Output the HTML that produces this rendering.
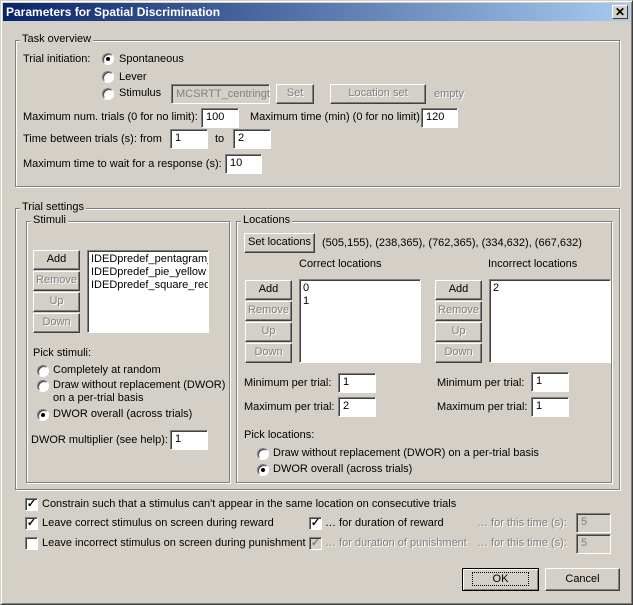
<!DOCTYPE html>
<html><head><meta charset="utf-8"><style>
*{box-sizing:border-box;margin:0;padding:0}
body{width:633px;height:605px;background:#d4d0c8;font-family:"Liberation Sans",sans-serif;font-size:11px;color:#000;position:relative;overflow:hidden}
.a{position:absolute;white-space:nowrap}
.win{left:0;top:0;width:633px;height:605px;border:1px solid;border-color:#d4d0c8 #404040 #404040 #d4d0c8;box-shadow:inset 1px 1px 0 #fff,inset -1px -1px 0 #808080}
.title{left:3px;top:3px;width:627px;height:18px;background:linear-gradient(90deg,#0a246a,#a6caf0);color:#fff;font-weight:bold;font-size:12px;padding:2px 0 0 3px}
.close{left:612px;top:5px;width:16px;height:14px;background:#d4d0c8;border:1px solid;border-color:#fff #404040 #404040 #fff;font-size:12px;font-weight:bold;text-align:center;line-height:12px;color:#000}
.grp{border:1px solid #808080;box-shadow:1px 1px 0 #fff,inset 1px 1px 0 #fff}
.lbl{background:#d4d0c8;padding:0 2px}
.btn{background:#d4d0c8;border:1px solid;border-color:#fff #404040 #404040 #fff;box-shadow:inset -1px -1px 0 #808080;text-align:center;line-height:17px}
.dis{color:#808080;text-shadow:1px 1px 0 #fff}
.ed{background:#fff;border:1px solid;border-color:#808080 #fff #fff #808080;box-shadow:inset 1px 1px 0 #404040;padding:2px 0 0 4px;line-height:13px}
.edd{background:#d4d0c8;color:#808080}
.rad{width:12px;height:12px;border-radius:50%;background:#fff;border:1px solid;border-color:#808080 #fff #fff #808080;box-shadow:inset 1px 1px 0 #404040}
.rad.on::after{content:"";position:absolute;left:3px;top:3px;width:4px;height:4px;border-radius:50%;background:#000}
.cb{width:13px;height:13px;background:#fff;border:1px solid;border-color:#808080 #fff #fff #808080;box-shadow:inset 1px 1px 0 #404040;font-size:11px;line-height:11px;text-align:center;font-weight:bold}
.cbd{background:#d4d0c8;color:#808080}
</style></head><body>
<div class="a win"></div>
<div class="a title">Parameters for Spatial Discrimination</div>
<div class="a close">✕</div>

<div class="a grp" style="left:15px;top:40px;width:605px;height:147px"></div>
<div class="a lbl" style="left:20px;top:33px">Task overview</div>
<div class="a" style="left:23px;top:53px">Trial initiation:</div>
<div class="a rad on" style="left:102px;top:53px"></div><div class="a" style="left:119px;top:53px">Spontaneous</div>
<div class="a rad" style="left:102px;top:71px"></div><div class="a" style="left:119px;top:71px">Lever</div>
<div class="a rad" style="left:102px;top:88px"></div><div class="a" style="left:119px;top:87px">Stimulus</div>
<div class="a ed edd" style="left:171px;top:84px;width:99px;height:20px;padding-top:3px">MCSRTT_centringt</div>
<div class="a btn dis" style="left:276px;top:84px;width:38px;height:20px">Set</div>
<div class="a btn dis" style="left:330px;top:84px;width:96px;height:20px">Location set</div>
<div class="a dis" style="left:434px;top:88px">empty</div>
<div class="a" style="left:23px;top:111px">Maximum num. trials (0 for no limit):</div>
<div class="a ed" style="left:201px;top:108px;width:38px;height:20px">100</div>
<div class="a" style="left:250px;top:111px">Maximum time (min) (0 for no limit):</div>
<div class="a ed" style="left:421px;top:108px;width:37px;height:20px">120</div>
<div class="a" style="left:23px;top:133px">Time between trials (s): from</div>
<div class="a ed" style="left:170px;top:129px;width:38px;height:20px">1</div>
<div class="a" style="left:215px;top:133px">to</div>
<div class="a ed" style="left:233px;top:129px;width:38px;height:20px">2</div>
<div class="a" style="left:23px;top:158px">Maximum time to wait for a response (s):</div>
<div class="a ed" style="left:225px;top:154px;width:37px;height:20px">10</div>

<div class="a grp" style="left:15px;top:208px;width:605px;height:282px"></div>
<div class="a lbl" style="left:20px;top:201px">Trial settings</div>
<div class="a grp" style="left:26px;top:221px;width:204px;height:262px"></div>
<div class="a lbl" style="left:31px;top:214px">Stimuli</div>
<div class="a btn" style="left:33px;top:250px;width:47px;height:20px">Add</div>
<div class="a btn dis" style="left:33px;top:271px;width:47px;height:20px">Remove</div>
<div class="a btn dis" style="left:33px;top:292px;width:47px;height:20px">Up</div>
<div class="a btn dis" style="left:33px;top:313px;width:47px;height:20px">Down</div>
<div class="a ed" style="left:87px;top:250px;width:122px;height:83px;overflow:hidden;padding:2px 0 0 3px">IDEDpredef_pentagram_<br>IDEDpredef_pie_yellow<br>IDEDpredef_square_red</div>
<div class="a" style="left:33px;top:347px">Pick stimuli:</div>
<div class="a rad" style="left:37px;top:365px"></div><div class="a" style="left:53px;top:364px">Completely at random</div>
<div class="a rad" style="left:37px;top:380px"></div><div class="a" style="left:53px;top:379px;line-height:13px">Draw without replacement (DWOR)<br>on a per-trial basis</div>
<div class="a rad on" style="left:37px;top:409px"></div><div class="a" style="left:53px;top:408px">DWOR overall (across trials)</div>
<div class="a" style="left:31px;top:434px">DWOR multiplier (see help):</div>
<div class="a ed" style="left:170px;top:430px;width:38px;height:20px">1</div>

<div class="a grp" style="left:236px;top:221px;width:376px;height:262px"></div>
<div class="a lbl" style="left:241px;top:214px">Locations</div>
<div class="a btn" style="left:244px;top:233px;width:71px;height:20px">Set locations</div>
<div class="a" style="left:322px;top:237px">(505,155), (238,365), (762,365), (334,632), (667,632)</div>
<div class="a" style="left:299px;top:258px">Correct locations</div>
<div class="a" style="left:488px;top:258px">Incorrect locations</div>
<div class="a btn" style="left:245px;top:280px;width:47px;height:20px">Add</div>
<div class="a btn dis" style="left:245px;top:301px;width:47px;height:20px">Remove</div>
<div class="a btn dis" style="left:245px;top:322px;width:47px;height:20px">Up</div>
<div class="a btn dis" style="left:245px;top:343px;width:47px;height:20px">Down</div>
<div class="a ed" style="left:299px;top:279px;width:122px;height:84px;padding:2px 0 0 3px">0<br>1</div>
<div class="a btn" style="left:435px;top:280px;width:47px;height:20px">Add</div>
<div class="a btn dis" style="left:435px;top:301px;width:47px;height:20px">Remove</div>
<div class="a btn dis" style="left:435px;top:322px;width:47px;height:20px">Up</div>
<div class="a btn dis" style="left:435px;top:343px;width:47px;height:20px">Down</div>
<div class="a ed" style="left:489px;top:279px;width:122px;height:84px;padding:2px 0 0 3px">2</div>
<div class="a" style="left:244px;top:377px">Minimum per trial:</div>
<div class="a ed" style="left:338px;top:373px;width:38px;height:20px">1</div>
<div class="a" style="left:244px;top:401px">Maximum per trial:</div>
<div class="a ed" style="left:338px;top:397px;width:38px;height:20px">2</div>
<div class="a" style="left:437px;top:377px">Minimum per trial:</div>
<div class="a ed" style="left:531px;top:372px;width:38px;height:20px">1</div>
<div class="a" style="left:437px;top:401px">Maximum per trial:</div>
<div class="a ed" style="left:531px;top:397px;width:38px;height:20px">1</div>
<div class="a" style="left:244px;top:429px">Pick locations:</div>
<div class="a rad" style="left:257px;top:448px"></div><div class="a" style="left:273px;top:447px">Draw without replacement (DWOR) on a per-trial basis</div>
<div class="a rad on" style="left:257px;top:464px"></div><div class="a" style="left:273px;top:463px">DWOR overall (across trials)</div>

<div class="a cb" style="left:25px;top:498px">✓</div><div class="a" style="left:42px;top:498px">Constrain such that a stimulus can't appear in the same location on consecutive trials</div>
<div class="a cb" style="left:25px;top:517px">✓</div><div class="a" style="left:42px;top:517px">Leave correct stimulus on screen during reward</div>
<div class="a cb" style="left:25px;top:537px"></div><div class="a" style="left:42px;top:537px">Leave incorrect stimulus on screen during punishment</div>
<div class="a cb" style="left:309px;top:517px">✓</div><div class="a" style="left:325px;top:517px">… for duration of reward</div>
<div class="a cb cbd" style="left:309px;top:537px">✓</div><div class="a dis" style="left:325px;top:537px">… for duration of punishment</div>
<div class="a dis" style="left:477px;top:517px">… for this time (s):</div>
<div class="a ed edd" style="left:576px;top:513px;width:35px;height:20px">5</div>
<div class="a dis" style="left:477px;top:537px">… for this time (s):</div>
<div class="a ed edd" style="left:576px;top:534px;width:35px;height:20px">5</div>

<div class="a btn" style="left:462px;top:568px;width:77px;height:23px;border:1px solid #000;box-shadow:inset 1px 1px 0 #fff,inset -1px -1px 0 #808080;line-height:21px"><span style="outline:1px dotted #000;padding:0 20px">OK</span></div>
<div class="a btn" style="left:545px;top:568px;width:75px;height:23px;line-height:21px">Cancel</div>
</body></html>
